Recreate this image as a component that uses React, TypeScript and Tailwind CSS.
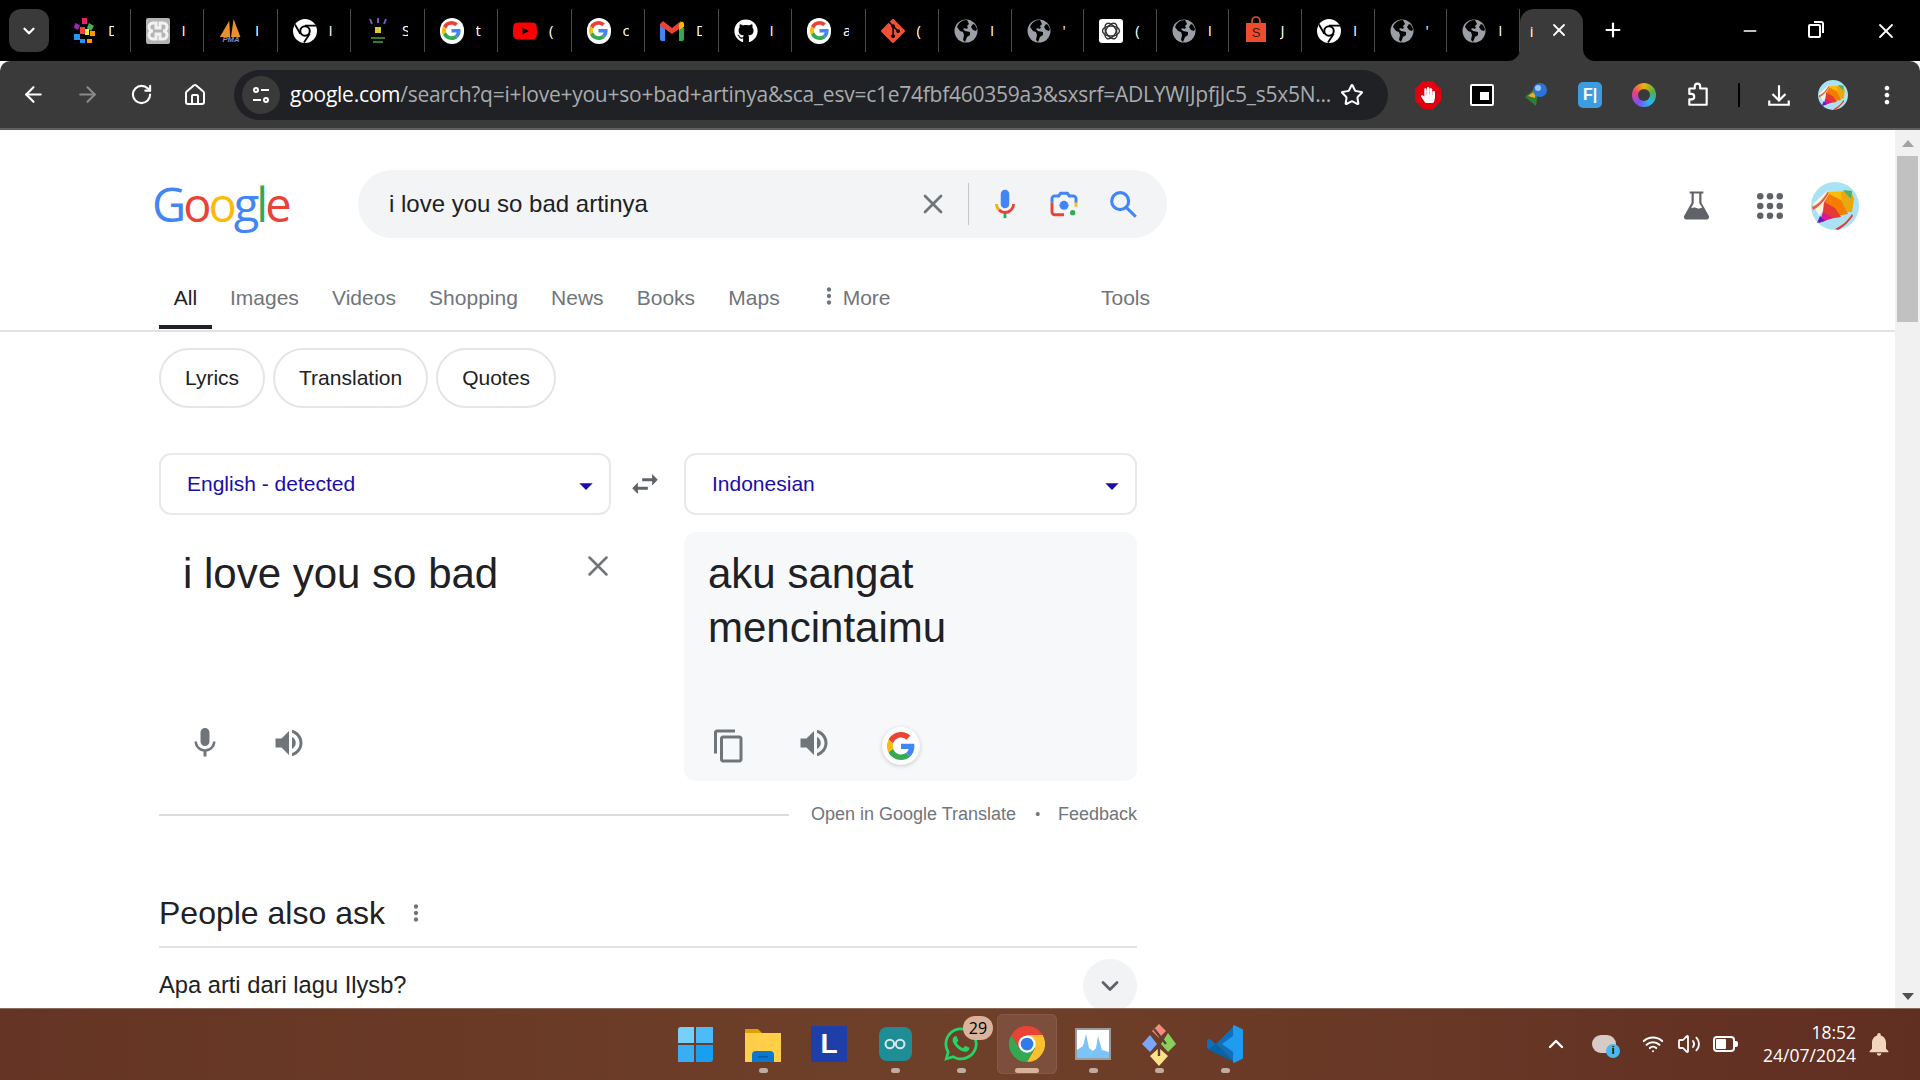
import React from 'react';
import { ArrowLeft, ArrowRight, RotateCw, Home, Star, ChevronDown, ChevronUp, X, Plus, Minus, Wifi, Volume2 } from 'lucide-react';
import { MdMic, MdVolumeUp, MdContentCopy, MdSwapHoriz, MdMoreVert, MdNotifications, MdArrowDropDown } from 'react-icons/md';
import { FaWhatsapp, FaGithub, FaHandPaper } from 'react-icons/fa';
import { SiGit, SiYoutube } from 'react-icons/si';

const GoogleG = ({ className }: { className: string }) => (
    <svg viewBox="0 0 48 48" className={className}>
        <path fill="#EA4335" d="M24 9.5c3.54 0 6.71 1.22 9.21 3.6l6.85-6.85C35.9 2.38 30.47 0 24 0 14.62 0 6.51 5.38 2.56 13.22l7.98 6.19C12.43 13.72 17.74 9.5 24 9.5z" />
        <path fill="#4285F4" d="M46.98 24.55c0-1.57-.15-3.09-.38-4.55H24v9.02h12.94c-.58 2.96-2.26 5.48-4.78 7.18l7.73 6c4.51-4.18 7.09-10.36 7.09-17.65z" />
        <path fill="#FBBC05" d="M10.53 28.59c-.48-1.45-.76-2.99-.76-4.59s.27-3.14.76-4.59l-7.98-6.19C.92 16.46 0 20.12 0 24c0 3.88.92 7.54 2.56 10.78l7.97-6.19z" />
        <path fill="#34A853" d="M24 48c6.48 0 11.93-2.13 15.89-5.81l-7.73-6c-2.15 1.45-4.92 2.3-8.16 2.3-6.26 0-11.57-4.22-13.47-9.91l-7.98 6.19C6.51 42.62 14.62 48 24 48z" />
    </svg>
);

const ChromeLogo = ({ className }: { className: string }) => (
    <svg viewBox="0 0 48 48" className={className}>
        <path fill="#ea4335" d="M3.2 12A24 24 0 0 1 44.8 12L24 12 13.6 30Z" />
        <path fill="#fbc02d" d="M44.8 12A24 24 0 0 1 24 48L34.4 30 24 12Z" />
        <path fill="#34a853" d="M24 48A24 24 0 0 1 3.2 12L13.6 30 34.4 30Z" />
        <circle cx="24" cy="24" r="11.5" fill="#fff" />
        <circle cx="24" cy="24" r="8.5" fill="#2f7be8" />
    </svg>
);

// white chrome favicon used by the chrome:// style tabs
const ChromeMono = () => (
    <svg viewBox="0 0 48 48" className="h-[24px] w-[24px]">
        <circle cx="24" cy="24" r="24" fill="#fff" />
        <path fill="none" stroke="#000" strokeWidth="3.5" d="M24 13H46M14.500 29.500 4 11M33.500 29.500 22 47" />
        <circle cx="24" cy="24" r="11.500" fill="#000" />
        <circle cx="24" cy="24" r="7.500" fill="#fff" />
    </svg>
);

const GlobeIcon = () => (
    <svg viewBox="0 0 24 24" className="h-[24px] w-[24px]">
        <circle cx="12" cy="12" r="11.5" fill="#9aa0a6" />
        <path fill="#000" d="M9 1.5C6 3 4 5 3 8l3 4 3 1 1 3-1 5 2 2 2-5 3-2 0-3-5-1-2-2 2-1 1 1 2-1-1-2 2-2-2-4zM19 5l-2 3 2 3 3 1 1-2-2-4z" />
    </svg>
);

const Kite = ({ className }: { className: string }) => (
    <svg viewBox="0 0 48 48" className={className}>
        <circle cx="24" cy="24" r="24" fill="#a9e3f3" />
        <path fill="#fbf4df" d="M2 22 17 8 22 14 8 34Z" />
        <path fill="#ec5a45" d="M1 25C8 22 13 16 17 9l1 2C14 18 9 24 2 28Z" />
        <path fill="#fbbc05" d="M17 10 39 9 42 26 23 22Z" />
        <path fill="#e8a90e" d="M30 10 40 9 43 17 41 30 32 30Z" />
        <path fill="#4caf6a" d="M32 8 41 9 40 17Z" />
        <path fill="#f57c00" d="M18 12 30 18 37 32 26 34 13 20Z" />
        <path fill="#e53935" d="M13 20 24 26 30 35 11 38Z" />
        <path fill="#d81b8c" d="M12 30 22 36 8 41Z" />
        <path fill="#6a1bc9" d="M9 34 14 39 6 41Z" />
        <path fill="#e53935" d="M24 47C30 44 36 40 41 32l1 2C37 41 31 46 27 48Z" />
    </svg>
);

const FolderIcon = () => (
    <svg viewBox="0 0 36 36" className="h-[36px] w-[36px]">
        <path fill="#e0a100" d="M0 3h13l4 4h19v6H0Z" />
        <path fill="#ffcf4a" d="M0 7h36v29H0Z" />
        <path fill="#0a78d0" d="M7 36V29a4 4 0 0 1 4-4h14a4 4 0 0 1 4 4v7Z" />
        <path fill="#0a5ca6" d="M13 30h10v1.5H13Z" />
    </svg>
);

const VsCodeIcon = () => (
    <svg viewBox="0 0 36 40" className="h-[40px] w-[36px]">
        <path fill="#0f6fb8" d="M27 2 9 20 2 14.500 0 16v8l2 1.500L9 20l18 18Z" />
        <path fill="#0065a9" d="M27 38 9 20 2 25.500 0 24l1 1.500Z" />
        <path fill="#1f9cf0" d="M27 1 36 5.500v29L27 39l-1-1V28L15 20 26 12V2Z" />
    </svg>
);

const GoogleFav = () => (
    <div className="flex h-[26px] w-[26px] items-center justify-center rounded-full bg-white"><GoogleG className="h-[19px] w-[19px]" /></div>
);

const tabIcons: React.ReactNode[] = [
    <svg viewBox="0 0 24 28" className="h-[30px] w-[24px]">
        <path fill="#e91e63" d="M10 1h5v6h-5z" />
        <path fill="#4caf50" d="M17 6l5 3-3 5-4-3z" />
        <path fill="#ff9800" d="M18 14h5v5h-5zM15 22h5v4h-5z" />
        <path fill="#ffeb3b" d="M13 12h4v6h-4z" />
        <path fill="#2196f3" d="M2 17h6v6H2zM8 22h5v4H8z" />
        <path fill="#9c27b0" d="M3 6l5 2-2 5-4-2z" />
        <path fill="#f44336" d="M8 10h5v7H8z" />
    </svg>,
    <svg viewBox="0 0 24 26" className="h-[28px] w-[24px]">
        <rect width="24" height="26" rx="2" fill="#b4b4b4" />
        <path fill="none" stroke="#f2f2f2" strokeWidth="3" d="M7 5h3v5h4V5h3a3 3 0 0 1 0 8 3 3 0 0 1 0 8h-3v-5h-4v5H7a3 3 0 0 1 0-8 3 3 0 0 1 0-8Z" />
    </svg>,
    <svg viewBox="0 0 28 28" className="h-[30px] w-[28px]">
        <path fill="#e8912d" d="M1 21 12 2l1 19ZM14 21 17 0l8 21Z" />
        <text x="14" y="27" textAnchor="middle" fontSize="9" fontWeight="700" fontStyle="italic" fill="#7c8fc4" fontFamily="Liberation Sans, sans-serif">PMA</text>
    </svg>,
    <ChromeMono />,
    <svg viewBox="0 0 20 28" className="h-[28px] w-[20px]">
        <path fill="#d7c93a" d="M7 10h6v6H7z" />
        <path fill="#7e57c2" d="M2 2l2 5M10 1v5M18 2l-2 5" stroke="#7e57c2" strokeWidth="2" />
        <path fill="#2e7d32" d="M3 20h14v2H3zM5 24h10v2H5z" />
    </svg>,
    <GoogleFav />,
    <SiYoutube className="h-[24px] w-[24px] text-[#ff0000]" />,
    <GoogleFav />,
    <svg viewBox="0 0 24 20" className="h-[20px] w-[24px]">
        <path fill="#4285f4" d="M0 3h5v17H2a2 2 0 0 1-2-2Z" />
        <path fill="#34a853" d="M19 7h5v11a2 2 0 0 1-2 2h-3Z" />
        <path fill="#ea4335" d="M0 3 3 0l9 7 9-7 .5 3L19 8l-7 5-7-5L0 5Z" />
        <path fill="#fbbc05" d="M19 3 21 1a2 2 0 0 1 3 1.500V6l-5 3Z" />
    </svg>,
    <FaGithub className="h-[24px] w-[24px] text-white" />,
    <GoogleFav />,
    <SiGit className="h-[24px] w-[24px] text-[#f05133]" />,
    <GlobeIcon />,
    <GlobeIcon />,
    <svg viewBox="0 0 24 24" className="h-[24px] w-[24px]">
        <rect width="24" height="24" rx="3" fill="#fff" />
        <g fill="none" stroke="#333" strokeWidth="1.4">
            <ellipse cx="12" cy="12" rx="8.500" ry="5" />
            <ellipse cx="12" cy="12" rx="8.500" ry="5" transform="rotate(60 12 12)" />
            <ellipse cx="12" cy="12" rx="8.500" ry="5" transform="rotate(120 12 12)" />
        </g>
    </svg>,
    <GlobeIcon />,
    <svg viewBox="0 0 20 26" className="mb-[3px] h-[26px] w-[20px]">
        <path fill="none" stroke="#ee4d2d" strokeWidth="1.6" d="M6 8V5a4 4 0 0 1 8 0v3" />
        <path fill="#ee4d2d" d="M0 7h20v19H0Z" />
        <text x="10" y="21" textAnchor="middle" fontSize="13" fill="#3b1a10" fontFamily="Liberation Sans, sans-serif">S</text>
    </svg>,
    <ChromeMono />,
    <GlobeIcon />,
    <GlobeIcon />,
];
const tabTitles = ['D', 'I', 'I', 'I', 'S', 't', '(', 'c', 'D', 'I', 'a', '(', 'I', "'", '(', 'I', 'J', 'I', "'", 'I'];

const ToolSlot = ({ children }: { children: React.ReactNode }) => (
    <div className="flex h-full w-[54px] shrink-0 items-center justify-center">{children}</div>
);

const TabStrip = () => (
    <div className="flex h-[61px] shrink-0 items-start bg-black">
        <div className="mt-[9px] ml-[9px] flex h-[43px] w-[40px] shrink-0 items-center justify-center rounded-[12px] bg-[#3a3a3a]">
            <ChevronDown className="h-[18px] w-[18px] text-white" strokeWidth={3} />
        </div>
        <div className="ml-[8px] flex">
            {tabIcons.map((icon, i) => (
                <div key={i} className={i < 12
                    ? 'mt-[9px] flex h-[43px] w-[73.5px] shrink-0 items-center border-r border-[#4a4a4a] pl-[15px]'
                    : 'mt-[9px] flex h-[43px] w-[72.6px] shrink-0 items-center border-r border-[#4a4a4a] pl-[15px]'}>
                    <div className="flex w-[24px] items-center justify-center">{icon}</div>
                    <div className="ml-[12px] w-[6px] overflow-hidden font-['Open_Sans',sans-serif] text-[15px] text-white">{tabTitles[i]}</div>
                </div>
            ))}
        </div>
        <div className="relative mt-[9px] flex h-[52px] w-[63px] shrink-0 items-start rounded-t-[14px] bg-[#3a3a3a] pt-[11px] pl-[10px]">
            <svg viewBox="0 0 12 12" className="absolute bottom-0 -left-[12px] h-[12px] w-[12px]"><path fill="#3a3a3a" d="M12 0v12H0A12 12 0 0 0 12 0Z" /></svg>
            <svg viewBox="0 0 12 12" className="absolute -right-[12px] bottom-0 h-[12px] w-[12px]"><path fill="#3a3a3a" d="M0 0v12h12A12 12 0 0 1 0 0Z" /></svg>
            <span className="w-[8px] overflow-hidden font-['Open_Sans',sans-serif] text-[15px] text-white">i</span>
            <X className="ml-[11px] h-[20px] w-[20px] text-white" strokeWidth={2.2} />
        </div>
        <Plus className="mt-[19px] ml-[19px] h-[22px] w-[22px] text-white" strokeWidth={2.4} />
        <div className="ml-auto flex">
            <div className="flex h-[61px] w-[68px] items-center justify-center"><Minus className="h-[20px] w-[20px] text-white" strokeWidth={1.6} /></div>
            <div className="flex h-[61px] w-[68px] items-center justify-center pr-[8px]">
                <div className="relative h-[14px] w-[13px] rounded-[2px] border-2 border-white after:absolute after:-top-[5px] after:-right-[5px] after:h-[12px] after:w-[10px] after:rounded-tr-[3px] after:border-t-2 after:border-r-2 after:border-white" />
            </div>
            <div className="flex h-[61px] w-[68px] items-center justify-center"><X className="h-[24px] w-[24px] text-white" strokeWidth={1.8} /></div>
        </div>
    </div>
);

const Toolbar = () => (
    <div className="flex h-[69px] shrink-0 items-center rounded-t-[10px] border-b-2 border-[#5f5f5f] bg-[#3a3a3a] pl-[6px]">
        <ToolSlot><ArrowLeft className="h-[25px] w-[25px] text-white" strokeWidth={2} /></ToolSlot>
        <ToolSlot><ArrowRight className="h-[25px] w-[25px] text-[#8a8a8a]" strokeWidth={2} /></ToolSlot>
        <ToolSlot><RotateCw className="h-[23px] w-[23px] text-white" strokeWidth={2.2} /></ToolSlot>
        <ToolSlot><Home className="h-[24px] w-[24px] text-white" strokeWidth={2} /></ToolSlot>
        <div className="ml-[12px] flex h-[50px] w-[1154px] shrink-0 items-center rounded-full bg-[#202124] pl-[8px]">
            <div className="flex h-[38px] w-[38px] shrink-0 items-center justify-center rounded-full bg-[#3a3a3a]">
                <svg viewBox="0 0 24 24" className="h-[24px] w-[24px]" fill="none" stroke="#fff" strokeWidth="2">
                    <circle cx="7" cy="7" r="2" />
                    <path d="M12 7h8M4 17h8" />
                    <circle cx="17" cy="17" r="2" />
                </svg>
            </div>
            <div className="ml-[10px] w-[1044px] shrink-0 overflow-hidden font-['Open_Sans',sans-serif] text-[21px] tracking-[-0.25px] whitespace-nowrap text-[#a8abaf]">
                <span className="text-white">google.com</span>/search?q=i+love+you+so+bad+artinya&amp;sca_esv=c1e74fbf460359a3&amp;sxsrf=ADLYWIJpfjJc5_s5x5N...
            </div>
            <Star className="ml-[6px] h-[24px] w-[24px] shrink-0 text-white" strokeWidth={2} />
        </div>
        <div className="ml-[13px] flex h-full items-center">
            <ToolSlot>
                <div className="relative flex h-[28px] w-[26px] items-center justify-center">
                    <svg viewBox="0 0 26 28" className="absolute inset-0 h-[28px] w-[26px]"><path fill="#e0000f" d="M8 0h10l8 8v12l-8 8H8l-8-8V8Z" /></svg>
                    <FaHandPaper className="relative h-[16px] w-[16px] text-white" />
                </div>
            </ToolSlot>
            <ToolSlot>
                <div className="flex h-[22px] w-[24px] items-center justify-center rounded-[2px] border-2 border-white bg-black">
                    <div className="mt-[3px] ml-[4px] h-[8px] w-[9px] bg-white" />
                </div>
            </ToolSlot>
            <ToolSlot>
                <svg viewBox="0 0 24 26" className="h-[26px] w-[24px]">
                    <path fill="#2e7d32" d="M1 15 10 7l4 4-2 13Z" />
                    <path fill="#f9a825" d="M4 14 12 8l-1 8Z" />
                    <circle cx="16" cy="8" r="7" fill="#2c74d6" />
                    <circle cx="14" cy="6" r="3" fill="#9fc5ff" />
                </svg>
            </ToolSlot>
            <ToolSlot>
                <div className="flex h-[26px] w-[24px] items-center justify-center rounded-[5px] bg-[#3d9be0] font-['Liberation_Sans',sans-serif] text-[16px] font-bold text-white">F|</div>
            </ToolSlot>
            <ToolSlot>
                <div className="flex h-[24px] w-[24px] items-center justify-center rounded-full bg-[conic-gradient(#f4b400,#4caf50,#29b6f6,#7c4dff,#ec407a,#f4b400)]">
                    <div className="h-[12px] w-[12px] rounded-full bg-[#3a3a3a]" />
                </div>
            </ToolSlot>
            <ToolSlot>
                <svg viewBox="0 0 24 24" className="h-[26px] w-[26px]" fill="none" stroke="#fff" strokeWidth="2" strokeLinejoin="round">
                    <path d="M4 6h5V4a2.5 2.5 0 0 1 5 0v2h6v15H4v-5h2a2.5 2.5 0 0 0 0-5H4Z" />
                </svg>
            </ToolSlot>
            <div className="flex h-full w-[27px] shrink-0 items-center pl-[13px]">
                <div className="h-[24px] w-[2px] bg-black" />
            </div>
            <ToolSlot>
                <svg viewBox="0 0 24 24" className="h-[26px] w-[26px]" fill="none" stroke="#fff" strokeWidth="2">
                    <path d="M12 3v13M6 11l6 6 6-6M3 17v4h18v-4" />
                </svg>
            </ToolSlot>
            <ToolSlot><Kite className="h-[30px] w-[30px]" /></ToolSlot>
            <ToolSlot><MdMoreVert className="h-[28px] w-[28px] text-white" /></ToolSlot>
        </div>
    </div>
);

const navItems = ['Images', 'Videos', 'Shopping', 'News', 'Books', 'Maps'];
const chips = ['Lyrics', 'Translation', 'Quotes'];

const SearchHeader = () => (
    <div className="flex h-[109px] shrink-0 pt-[40px] pl-[152px]">
        <div className="flex h-[68px] w-[206px] shrink-0 items-center font-['Open_Sans',sans-serif] text-[47px] leading-none font-medium tracking-[-3px]">
            <span className="text-[#4285f4]">G</span>
            <span className="text-[#ea4335]">o</span>
            <span className="text-[#fbbc05]">o</span>
            <span className="text-[#4285f4]">g</span>
            <span className="text-[#34a853]">l</span>
            <span className="text-[#ea4335]">e</span>
        </div>
        <div className="flex h-[68px] w-[809px] shrink-0 items-center rounded-full bg-[#f3f4f6] pl-[31px]">
            <span className="text-[24px] text-[#202124]">i love you so bad artinya</span>
            <X className="ml-auto h-[32px] w-[32px] text-[#70757a]" strokeWidth={2} />
            <div className="mx-[19px] h-[42px] w-px bg-[#c4c7c5]" />
            <svg viewBox="0 0 24 24" className="h-[34px] w-[34px]">
                <path fill="#4285f4" d="M12 15c1.66 0 3-1.31 3-2.97V5c0-1.66-1.34-3-3-3S9 3.34 9 5v7.03C9 13.69 10.34 15 12 15z" />
                <path fill="#34a853" d="M11 18.08h2V22h-2z" />
                <path fill="#f4b400" d="M7.05 16.87c-1.27-1.33-2.05-2.83-2.05-4.87h2c0 1.45.56 2.42 1.47 3.38z" />
                <path fill="#ea4335" d="M12 16.93a4.97 5.25 0 0 1-3.54-1.55l-1.41 1.49A6.98 7.35 0 0 0 12 19c3.87 0 7-3.13 7-7h-2c0 2.76-2.24 4.93-5 4.93z" />
            </svg>
            <svg viewBox="0 0 24 24" className="ml-[26px] h-[32px] w-[32px]">
                <path fill="none" stroke="#4285f4" strokeWidth="2.2" d="M3 11V8a2 2 0 0 1 2-2h3l1.5-2h5L16 6h3a2 2 0 0 1 2 2v3" />
                <path fill="none" stroke="#ea4335" strokeWidth="2.2" d="M3 11v7a2 2 0 0 0 2 2h7" />
                <path fill="none" stroke="#fbbc05" strokeWidth="2.2" d="M21 11v3" />
                <circle cx="12" cy="13" r="3.4" fill="#4285f4" />
                <circle cx="18.500" cy="18.500" r="2" fill="#34a853" />
            </svg>
            <svg viewBox="0 0 24 24" className="mr-[27px] ml-[26px] h-[34px] w-[34px]" fill="none" stroke="#4285f4" strokeWidth="2.2">
                <circle cx="10" cy="10" r="6" />
                <path d="M14.5 14.5 21 21" />
            </svg>
        </div>
        <div className="mt-[2px] flex h-[68px] items-center pl-[513px]">
            <svg viewBox="0 0 24 24" className="h-[33px] w-[33px]" fill="#5f6368">
                <path fillRule="evenodd" d="M7 1h10v1.600h-1.400v6.600l5.300 9.600c.7 1.300-.2 2.700-1.600 2.700H4.700c-1.400 0-2.300-1.400-1.600-2.700l5.300-9.600V2.600H7ZM10 2.600v7L8 13.200c2-1 4-.2 5.500.4l2.700-.9L14 9.600v-7Z" />
            </svg>
            <svg viewBox="0 0 24 24" className="ml-[44px] h-[26px] w-[26px]" fill="#5f6368">
                {[3, 12, 21].flatMap((y) => [3, 12, 21].map((x) => <circle key={`${x}-${y}`} cx={x} cy={y} r="3" />))}
            </svg>
            <Kite className="ml-[28px] h-[48px] w-[48px]" />
        </div>
    </div>
);

const NavTabs = () => (
    <div className="flex h-[93px] shrink-0 border-b-2 border-[#e2e3e4] pt-[13px]">
        <div className="ml-[159px] flex h-[79px] w-[991px] text-[21px] text-[#70757a]">
            <div className="flex h-[77px] w-[53px] justify-center border-b-4 border-[#202124] pt-[30px] text-[#202124]">All</div>
            <div className="ml-[18px] flex gap-[33.2px] pt-[30px]">
                {navItems.map((label) => <span key={label}>{label}</span>)}
            </div>
            <div className="ml-[37px] flex items-start pt-[30px]">
                <MdMoreVert className="mt-[1px] mr-[2px] ml-[-1px] h-[26px] w-[26px]" />
                <span className="ml-[-1px]">More</span>
            </div>
            <span className="ml-auto pt-[30px]">Tools</span>
        </div>
    </div>
);

const TranslateBox = () => (
    <div className="mt-[45px] w-[978px]">
        <div className="flex items-center">
            <div className="flex h-[62px] w-[452px] items-center justify-between rounded-[12px] border-2 border-[#e8e9eb] pr-[7px] pl-[26px] text-[21px] text-[#1a0dab]">
                English - detected
                <MdArrowDropDown className="mt-[4px] h-[32px] w-[32px] text-[#1a0dab]" />
            </div>
            <div className="flex w-[73px] justify-center pr-[5px]"><MdSwapHoriz className="h-[34px] w-[34px] text-[#5f6368]" /></div>
            <div className="flex h-[62px] w-[453px] items-center justify-between rounded-[12px] border-2 border-[#e8e9eb] pr-[7px] pl-[26px] text-[21px] text-[#1a0dab]">
                Indonesian
                <MdArrowDropDown className="mt-[4px] h-[32px] w-[32px] text-[#1a0dab]" />
            </div>
        </div>
        <div className="mt-[17px] flex h-[249px]">
            <div className="flex w-[525px] flex-col pt-[15px] pl-[24px]">
                <div className="flex w-[432px] items-start justify-between">
                    <span className="text-[42px] leading-[54px] text-[#202124]">i love you so bad</span>
                    <X className="mt-[2px] h-[34px] w-[34px] text-[#70757a]" strokeWidth={1.8} />
                </div>
                <div className="mt-auto mb-[20px] ml-[4px] flex items-center">
                    <MdMic className="h-[36px] w-[36px] text-[#70757a]" />
                    <MdVolumeUp className="ml-[48px] h-[36px] w-[36px] text-[#70757a]" />
                </div>
            </div>
            <div className="flex w-[453px] flex-col rounded-[12px] bg-[#f7f8fa] pt-[15px] pl-[24px]">
                <span className="text-[42px] leading-[54px] text-[#202124]">aku sangat mencintaimu</span>
                <div className="mt-auto mb-[15px] flex items-center">
                    <MdContentCopy className="ml-[3px] h-[36px] w-[36px] text-[#70757a]" />
                    <MdVolumeUp className="mb-[5px] ml-[49px] h-[36px] w-[36px] text-[#70757a]" />
                    <div className="ml-[50px] flex h-[38px] w-[38px] items-center justify-center rounded-full bg-white shadow-[0_1px_4px_rgba(0,0,0,0.2)]">
                        <GoogleG className="h-[28px] w-[28px]" />
                    </div>
                </div>
            </div>
        </div>
        <div className="mt-[20px] flex items-center text-[18px] text-[#70757a]">
            <div className="h-[2px] w-[630px] bg-[#dadce0]" />
            <span className="ml-[22px]">Open in Google Translate</span>
            <span className="ml-[19px] text-[14px]">•</span>
            <span className="ml-auto">Feedback</span>
        </div>
    </div>
);

const PeopleAlsoAsk = () => (
    <div className="mt-[60px] w-[978px]">
        <div className="flex h-[49px] items-center">
            <span className="text-[32px] text-[#202124]">People also ask</span>
            <MdMoreVert className="ml-[18px] h-[26px] w-[26px] text-[#70757a]" />
        </div>
        <div className="mt-[9px] h-[2px] bg-[#e2e3e4]" />
        <div className="mt-[11px] flex h-[54px] items-center justify-between">
            <span className="text-[23.7px] text-[#202124]">Apa arti dari lagu Ilysb?</span>
            <div className="flex h-[54px] w-[54px] items-center justify-center rounded-full bg-[#f1f3f4]">
                <ChevronDown className="h-[28px] w-[28px] text-[#5f6368]" strokeWidth={2.4} />
            </div>
        </div>
    </div>
);

const Scrollbar = () => (
    <div className="flex w-[25px] shrink-0 flex-col items-center bg-[#f1f1f1]">
        <div className="mt-[10px] h-0 w-0 border-x-[6px] border-b-[7px] border-x-transparent border-b-[#a3a3a3]" />
        <div className="mt-[9px] h-[166px] w-[21px] bg-[#c1c1c1]" />
        <div className="mt-auto mb-[8px] h-0 w-0 border-x-[6px] border-t-[7px] border-x-transparent border-t-[#505050]" />
    </div>
);

const Dot = ({ wide }: { wide?: boolean }) => (
    <div className={wide ? 'h-[5px] w-[24px] rounded-full bg-[#d8b39c]' : 'h-[5px] w-[9px] rounded-full bg-[#c2aba0]'} />
);

const TaskItem = ({ children, dot, active }: { children: React.ReactNode; dot?: boolean; active?: boolean }) => (
    <div className={active
        ? 'relative flex h-[60px] w-[60px] flex-col items-center justify-center rounded-[6px] bg-[#7c4f3d] shadow-[inset_0_0_0_1px_#86594a]'
        : 'relative flex h-[60px] w-[60px] flex-col items-center justify-center'}>
        {children}
        {active && <div className="absolute bottom-[1px]"><Dot wide /></div>}
        {dot && <div className="absolute bottom-[1px]"><Dot /></div>}
    </div>
);

const Taskbar = () => (
    <div className="flex h-[72px] shrink-0 items-center bg-[linear-gradient(90deg,#653424,#6f4029_50%,#612e22)] shadow-[inset_0_1px_0_#8a6a5a]">
        <div className="ml-[665px] flex gap-[6px]">
            <div className="mr-[2px]">
                <TaskItem>
                    <div className="grid h-[35px] w-[35px] grid-cols-2 gap-[2px]">
                        <div className="rounded-tl-[3px] bg-[#77d0fb]" /><div className="bg-[#4cbcf8]" /><div className="bg-[#39aef5]" /><div className="rounded-br-[3px] bg-[#17a0f2]" />
                    </div>
                </TaskItem>
            </div>
            <TaskItem dot><FolderIcon /></TaskItem>
            <TaskItem>
                <div className="flex h-[36px] w-[36px] items-center justify-center bg-[#1e3faa] font-['Liberation_Sans',sans-serif] text-[28px] font-bold text-white">L</div>
            </TaskItem>
            <TaskItem dot>
                <div className="flex h-[34px] w-[33px] items-center justify-center rounded-[8px] bg-[#1f8d96]">
                    <svg viewBox="0 0 26 14" className="h-[12px] w-[24px]" fill="none" stroke="#cfe9ea" strokeWidth="2.4">
                        <circle cx="7" cy="7" r="5" />
                        <circle cx="19" cy="7" r="5" />
                    </svg>
                </div>
            </TaskItem>
            <TaskItem dot>
                <FaWhatsapp className="h-[38px] w-[38px] text-[#25d366]" />
                <div className="absolute top-[2px] right-[-2px] flex h-[24px] w-[30px] items-center justify-center rounded-full bg-[#d9b39b] font-['Open_Sans',sans-serif] text-[16px] text-black">29</div>
            </TaskItem>
            <TaskItem active><ChromeLogo className="h-[36px] w-[36px]" /></TaskItem>
            <TaskItem dot>
                <svg viewBox="0 0 36 32" className="h-[32px] w-[36px]">
                    <path fill="#9b9b9b" d="M0 0h36v32H0Z" />
                    <path fill="#ffffff" d="M2 2h32v28H2Z" />
                    <path fill="#7cc4f5" d="M2 22 8 18l3-12 3 14 4 3 3-3 2-12 4 14 7 2v6H2Z" />
                </svg>
            </TaskItem>
            <TaskItem dot>
                <svg viewBox="0 0 36 44" className="h-[44px] w-[36px]">
                    <path fill="#f28b82" d="M18 2 25 9 18 16 11 9Z" />
                    <path fill="#8bcf5f" d="M27 11 35 22 27 30 20 22Z" />
                    <path fill="#7aa7f7" d="M9 13 16 22 9 30 1 22Z" />
                    <path fill="#fde28a" d="M18 26 27 34 18 44 9 34Z" />
                    <path stroke="#5d4037" strokeWidth="2.4" fill="none" d="M13 7 25 22M18 24v10" />
                </svg>
            </TaskItem>
            <TaskItem dot><VsCodeIcon /></TaskItem>
        </div>
        <div className="ml-auto flex items-center text-white">
            <ChevronUp className="h-[24px] w-[24px]" strokeWidth={2.4} />
            <div className="relative ml-[24px] h-[18px] w-[24px] rounded-full bg-[#d8cbc5]">
                <div className="absolute right-[-4px] bottom-[-5px] flex h-[14px] w-[14px] items-center justify-center rounded-full bg-[#4db8f0] text-[10px] leading-none font-bold text-black">i</div>
            </div>
            <Wifi className="ml-[26px] h-[22px] w-[22px]" strokeWidth={2.2} />
            <Volume2 className="ml-[13px] h-[24px] w-[24px]" strokeWidth={1.8} />
            <div className="relative ml-[12px] flex h-[16px] w-[22px] items-center rounded-[4px] border-2 border-white p-[1px]">
                <div className="h-full w-[10px] rounded-[1px] bg-white" />
                <div className="absolute right-[-5px] h-[6px] w-[3px] rounded-r-[2px] bg-white" />
            </div>
            <div className="ml-[28px] flex flex-col items-end font-['Open_Sans',sans-serif] text-[17.5px] leading-[23px]">
                <span>18:52</span>
                <span>24/07/2024</span>
            </div>
            <MdNotifications className="mr-[27px] ml-[9px] h-[28px] w-[28px] text-[#f2d5bd]" />
        </div>
    </div>
);

export default function App() {
    return (
        <div className="flex h-[1080px] w-[1920px] flex-col overflow-hidden bg-white font-['Liberation_Sans',Arial,sans-serif]">
            <TabStrip />
            <Toolbar />
            <div className="flex min-h-0 flex-1">
                <div className="min-w-0 flex-1 overflow-hidden">
                    <SearchHeader />
                    <NavTabs />
                    <div className="pl-[159px]">
                        <div className="mt-[16px] flex gap-[8px]">
                            {chips.map((chip) => (
                                <div key={chip} className="flex h-[60px] items-center rounded-[30px] border-2 border-[#e4e5e7] px-[24px] text-[21px] text-[#202124]">{chip}</div>
                            ))}
                        </div>
                        <TranslateBox />
                        <PeopleAlsoAsk />
                    </div>
                </div>
                <Scrollbar />
            </div>
            <Taskbar />
        </div>
    );
}
